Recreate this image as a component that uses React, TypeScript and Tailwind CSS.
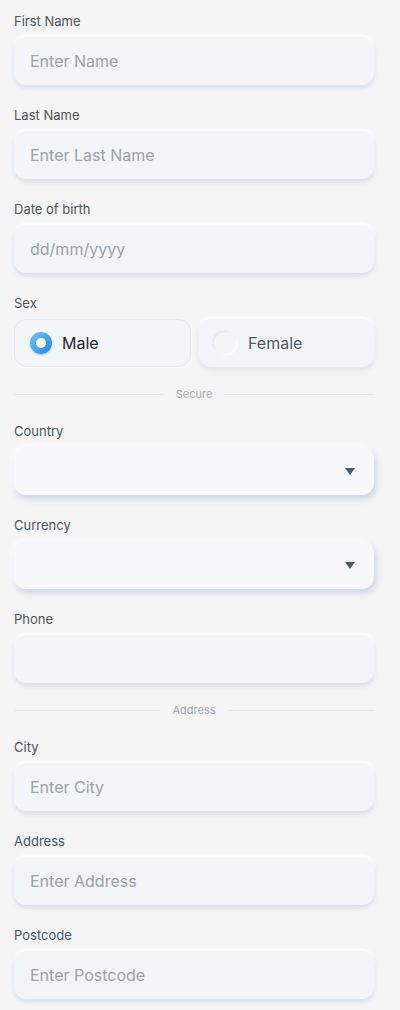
const font = { fontFamily: 'Inter, "Open Sans", sans-serif' };

function Label({ children }: { children: string }) {
  return <p className="h-5 text-[13px] leading-5 text-[#4b5563]">{children}</p>;
}

function TextField({ label, placeholder }: { label: string; placeholder?: string }) {
  return (
    <div className="mb-5">
      <Label>{label}</Label>
      <div className="mt-[6px] flex h-12 items-center rounded-xl bg-[#f3f5f8] px-4 text-base text-[#9aa3ae] shadow-[0_3px_4px_rgba(196,212,230,0.65),0_-2px_3px_rgba(255,255,255,0.9)]">
        {placeholder}
      </div>
    </div>
  );
}

function SelectField({ label }: { label: string }) {
  return (
    <div className="mb-5">
      <Label>{label}</Label>
      <div className="mt-[6px] flex h-12 items-center justify-end rounded-xl bg-[#f6f8fa] pr-[19px] shadow-[2px_4px_6px_rgba(186,203,224,0.75),-2px_-2px_4px_rgba(255,255,255,0.95)]">
        <svg width="10" height="7" viewBox="0 0 10 7">
          <path d="M0 0h10L5 7z" fill="#4a5968" />
        </svg>
      </div>
    </div>
  );
}

function Divider({ text }: { text: string }) {
  return (
    <div className="mb-5 flex h-[14px] items-center gap-3">
      <div className="h-px flex-1 bg-[#e3e6ea]" />
      <span className="text-[11px] leading-[14px] text-[#a3acb7]">{text}</span>
      <div className="h-px flex-1 bg-[#e3e6ea]" />
    </div>
  );
}

export default function App() {
  return (
    <div className="min-h-[1010px] bg-[#f5f5f5] px-[14px] pt-[11px] pr-[26px]" style={font}>
      <TextField label="First Name" placeholder="Enter Name" />
      <TextField label="Last Name" placeholder="Enter Last Name" />
      <TextField label="Date of birth" placeholder="dd/mm/yyyy" />

      <div className="mb-5">
        <Label>Sex</Label>
        <div className="mt-[6px] flex gap-2">
          <div className="flex h-12 flex-1 items-center gap-[10px] rounded-xl border border-[#e2e8ef] bg-[#f3f5f8] pl-[15px] shadow-[0_1px_2px_rgba(255,255,255,1)]">
            <span className="flex h-[22px] w-[22px] items-center justify-center rounded-full bg-gradient-to-br from-[#6cc8f7] to-[#1f84e0] shadow-[0_1px_2px_rgba(30,120,210,0.4)]">
              <span className="h-[10px] w-[10px] rounded-full bg-white" />
            </span>
            <span className="text-base text-[#1f2933]">Male</span>
          </div>
          <div className="flex h-12 flex-1 items-center gap-[12px] rounded-xl bg-[#f3f5f8] pl-[15px] shadow-[0_3px_5px_rgba(205,216,230,0.6),0_-2px_3px_rgba(255,255,255,0.9)]">
            <span className="h-[22px] w-[22px] rounded-full bg-[#f4f5f7] shadow-[-1px_-1px_2px_rgba(215,222,232,0.8),1px_1px_2px_rgba(255,255,255,1)]" />
            <span className="text-base text-[#4f5965]">Female</span>
          </div>
        </div>
      </div>

      <Divider text="Secure" />
      <SelectField label="Country" />
      <SelectField label="Currency" />
      <TextField label="Phone" />
      <Divider text="Address" />
      <TextField label="City" placeholder="Enter City" />
      <TextField label="Address" placeholder="Enter Address" />
      <TextField label="Postcode" placeholder="Enter Postcode" />
    </div>
  );
}
